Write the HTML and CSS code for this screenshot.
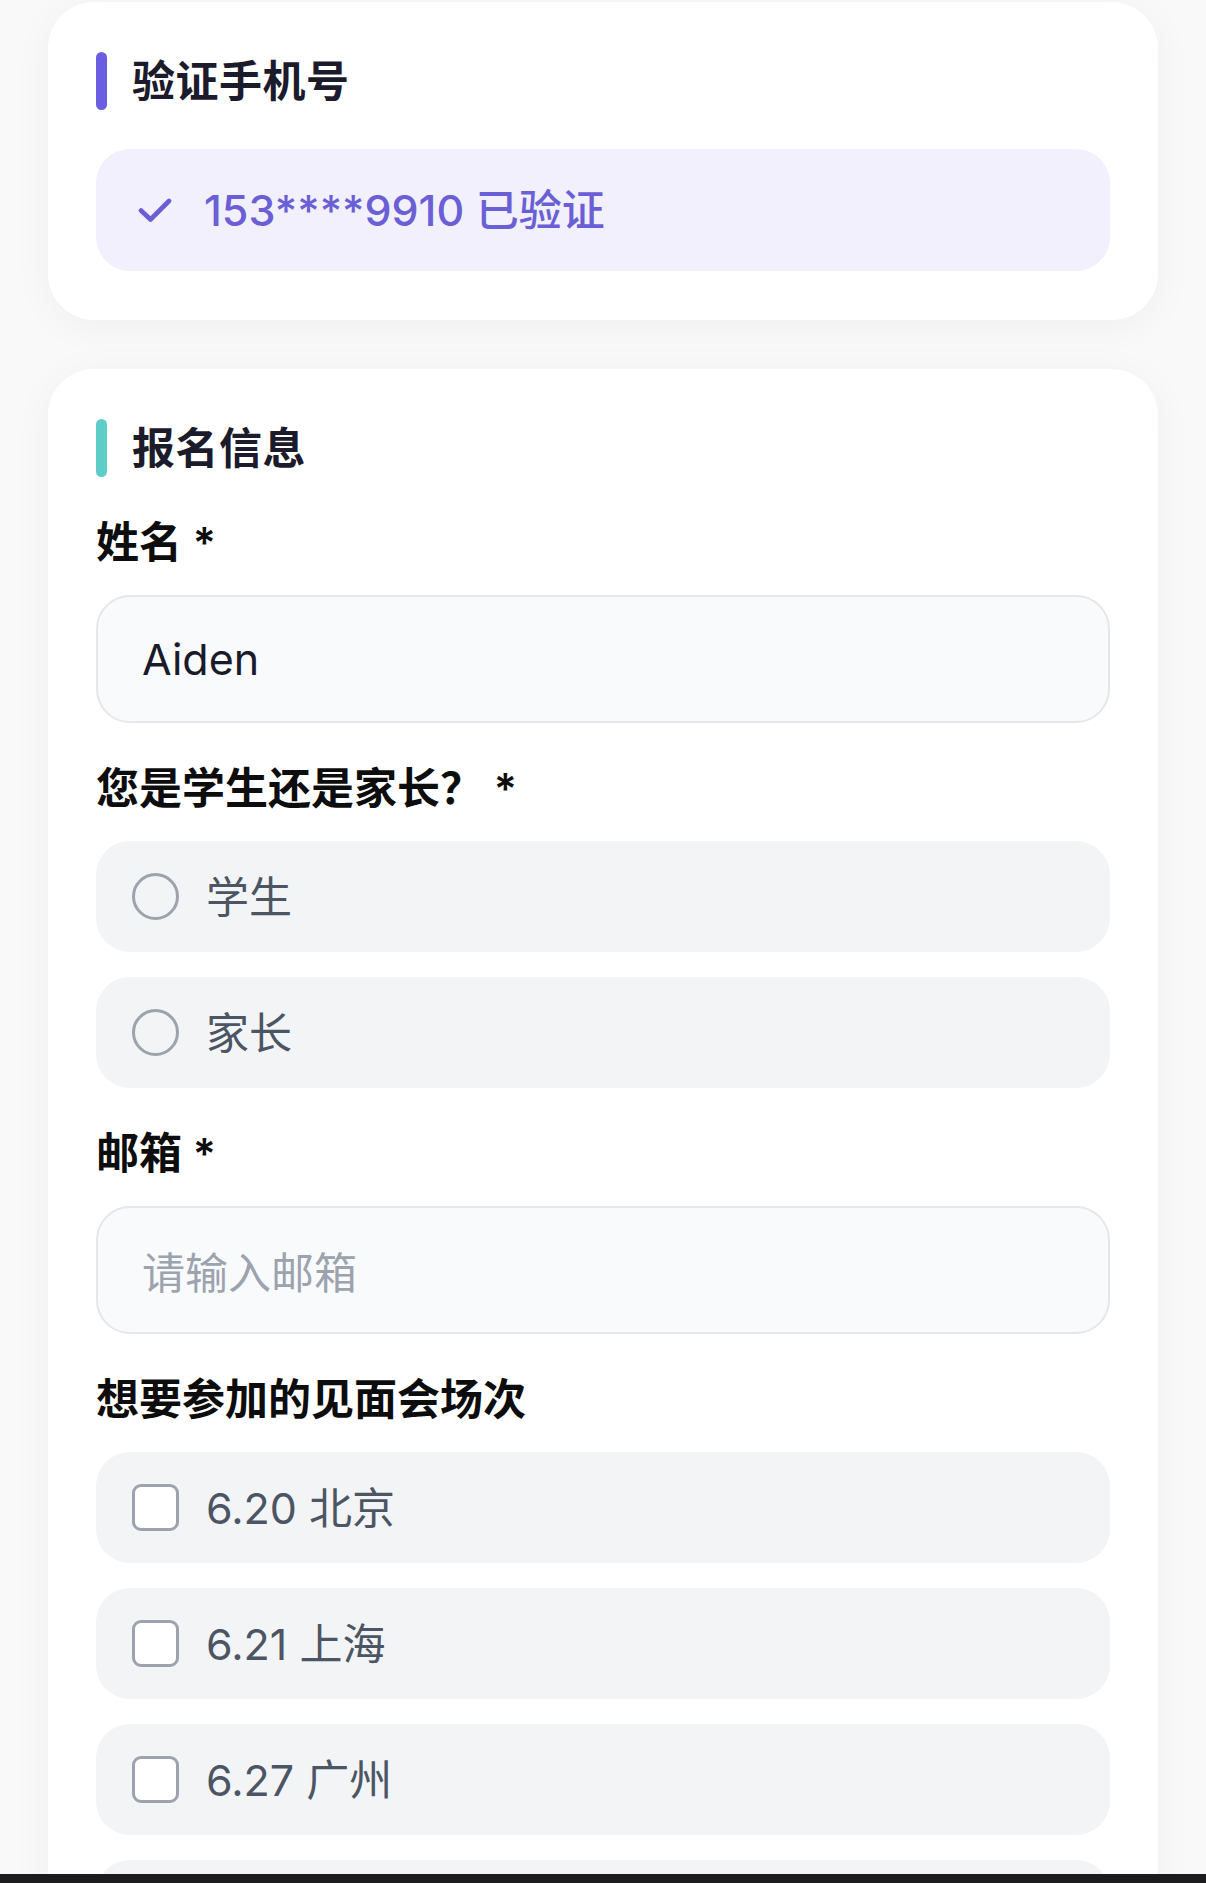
FILE: index.html
```html
<!DOCTYPE html>
<html lang="zh-CN">
<head>
<meta charset="utf-8">
<title>报名</title>
<link rel="stylesheet" href="styles.css">
</head>
<body>
<main class="page">
  <section class="card">
    <div class="section-title">
      <span class="bar bar-purple"></span>
      <h2>验证手机号</h2>
    </div>
    <div class="verified">
      <svg class="check" viewBox="0 0 34 26" width="34" height="26" aria-hidden="true">
        <path d="M3 13.5 L12.5 22.5 L31 4" fill="none" stroke="#6b5fd6" stroke-width="4.6" stroke-linecap="round" stroke-linejoin="round"/>
      </svg>
      <span class="verified-text">153****9910 已验证</span>
    </div>
  </section>

  <section class="card">
    <div class="section-title">
      <span class="bar bar-teal"></span>
      <h2>报名信息</h2>
    </div>

    <div class="field">
      <label class="label">姓名 *</label>
      <div class="input">Aiden</div>
    </div>

    <div class="field">
      <div class="label">您是学生还是家长？ *</div>
      <div class="options">
        <div class="option"><span class="radio"></span><span class="opt-text">学生</span></div>
        <div class="option"><span class="radio"></span><span class="opt-text">家长</span></div>
      </div>
    </div>

    <div class="field">
      <label class="label">邮箱 *</label>
      <div class="input placeholder">请输入邮箱</div>
    </div>

    <div class="field">
      <div class="label">想要参加的见面会场次</div>
      <div class="options">
        <div class="option"><span class="checkbox"></span><span class="opt-text">6.20 北京</span></div>
        <div class="option"><span class="checkbox"></span><span class="opt-text">6.21 上海</span></div>
        <div class="option"><span class="checkbox"></span><span class="opt-text">6.27 广州</span></div>
        <div class="option"><span class="checkbox"></span></div>
      </div>
    </div>
  </section>
</main>
<div class="home-bar"></div>
</body>
</html>
```

FILE: styles.css
```css
html, body {
  margin: 0;
  padding: 0;
}

body {
  background: #f9f9fa;
  font-family: Inter, "Noto Sans CJK SC", "Noto Sans", sans-serif;
  color: #111111;
}

.page {
  padding: 2px 48px 80px;
  display: flex;
  flex-direction: column;
  gap: 49px;
}

.card {
  background: #ffffff;
  border-radius: 46px;
  padding: 50px 48px 49px;
  box-shadow: 0 6px 40px rgba(0, 0, 0, 0.045);
}

.section-title {
  display: flex;
  align-items: center;
  gap: 25px;
  height: 58px;
}

.bar {
  width: 11px;
  height: 58px;
  border-radius: 6px;
  flex: none;
}

.bar-purple { background: #6c5ee0; }
.bar-teal { background: #5ecdc7; }

.section-title h2 {
  margin: 0;
  font-size: 43px;
  line-height: 58px;
  font-weight: 700;
  color: #1b1b2b;
  letter-spacing: 0.5px;
}

.verified {
  margin-top: 39px;
  height: 122px;
  border-radius: 34px;
  background: #f1f0fc;
  display: flex;
  align-items: center;
  padding-left: 42px;
  gap: 32px;
}

.check {
  flex: none;
}

.verified-text {
  font-size: 43px;
  line-height: 58px;
  color: #6b5fd6;
  font-weight: 500;
}

.field {
  margin-top: 36px;
}

.label {
  display: block;
  font-size: 43px;
  line-height: 58px;
  font-weight: 600;
  color: #0d0d0d;
  margin-bottom: 24px;
}

.input {
  box-sizing: border-box;
  height: 128px;
  border: 2px solid #e5e7eb;
  border-radius: 34px;
  background: #f9fafb;
  display: flex;
  align-items: center;
  padding-left: 44px;
  font-size: 43px;
  color: #1a1a2a;
}

.input.placeholder {
  color: #9ca3af;
}

.options {
  display: flex;
  flex-direction: column;
  gap: 25px;
}

.option {
  height: 111px;
  border-radius: 34px;
  background: #f3f4f6;
  display: flex;
  align-items: center;
  padding-left: 36px;
  gap: 27px;
}

.radio {
  box-sizing: border-box;
  width: 47px;
  height: 47px;
  border: 3px solid #9ca3af;
  border-radius: 50%;
  flex: none;
}

.checkbox {
  box-sizing: border-box;
  width: 47px;
  height: 47px;
  border: 3px solid #9ca3af;
  border-radius: 9px;
  background: #ffffff;
  flex: none;
}

.opt-text {
  font-size: 43px;
  line-height: 58px;
  color: #4b5563;
}

.home-bar {
  position: fixed;
  left: 0;
  right: 0;
  bottom: 0;
  height: 9px;
  background: #1c1c1e;
}
```
